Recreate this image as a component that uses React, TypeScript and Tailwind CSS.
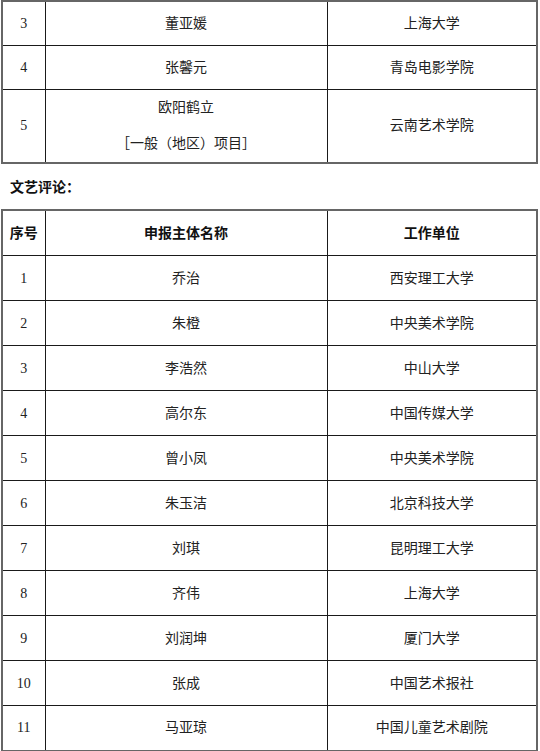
const font = "font-['Liberation_Serif','Noto_Sans_CJK_SC',serif]";

type Row = { no: string; name: React.ReactNode; unit: string; tall?: boolean };

const first: Row[] = [
  { no: "3", name: "董亚媛", unit: "上海大学" },
  { no: "4", name: "张馨元", unit: "青岛电影学院" },
  {
    no: "5",
    name: (
      <>
        <div>欧阳鹤立</div>
        <div>［一般（地区）项目］</div>
      </>
    ),
    unit: "云南艺术学院",
    tall: true,
  },
];

const second: Row[] = [
  { no: "1", name: "乔治", unit: "西安理工大学" },
  { no: "2", name: "朱橙", unit: "中央美术学院" },
  { no: "3", name: "李浩然", unit: "中山大学" },
  { no: "4", name: "高尔东", unit: "中国传媒大学" },
  { no: "5", name: "曾小凤", unit: "中央美术学院" },
  { no: "6", name: "朱玉洁", unit: "北京科技大学" },
  { no: "7", name: "刘琪", unit: "昆明理工大学" },
  { no: "8", name: "齐伟", unit: "上海大学" },
  { no: "9", name: "刘润坤", unit: "厦门大学" },
  { no: "10", name: "张成", unit: "中国艺术报社" },
  { no: "11", name: "马亚琼", unit: "中国儿童艺术剧院" },
];

const cell = "border border-[#1a1a1a] text-center align-middle p-0";

function Cols() {
  return (
    <colgroup>
      <col className="w-[43px]" />
      <col className="w-[282px]" />
      <col />
    </colgroup>
  );
}

function Body({ rows, short }: { rows: Row[]; short?: boolean }) {
  return (
    <tbody>
      {rows.map((r, i) => (
        <tr
          key={i}
          className={r.tall ? "h-[72px]" : short ? "h-[44px]" : "h-[45px]"}
        >
          <td className={cell}>{r.no}</td>
          <td className={`${cell} ${r.tall ? "leading-[36px]" : ""}`}>{r.name}</td>
          <td className={cell}>{r.unit}</td>
        </tr>
      ))}
    </tbody>
  );
}

export default function App() {
  return (
    <div className={`w-[540px] h-[751px] overflow-hidden bg-white text-[14px] text-[#222] ${font}`}>
      <table className="ml-[1px] w-[537px] table-fixed border-collapse border-2 border-[#666]">
        <Cols />
        <Body rows={first} short />
      </table>

      <div className="h-[45px] flex items-center pl-[10px] font-semibold text-[14px] font-['Noto_Sans_CJK_SC',sans-serif] text-[#111]">
        文艺评论：
      </div>

      <table className="ml-[1px] w-[537px] table-fixed border-collapse border-2 border-[#666]">
        <Cols />
        <thead>
          <tr className="h-[46px] font-semibold font-['Noto_Sans_CJK_SC',sans-serif] text-[#111]">
            <th className={cell}>序号</th>
            <th className={cell}>申报主体名称</th>
            <th className={cell}>工作单位</th>
          </tr>
        </thead>
        <Body rows={second} />
      </table>
    </div>
  );
}
